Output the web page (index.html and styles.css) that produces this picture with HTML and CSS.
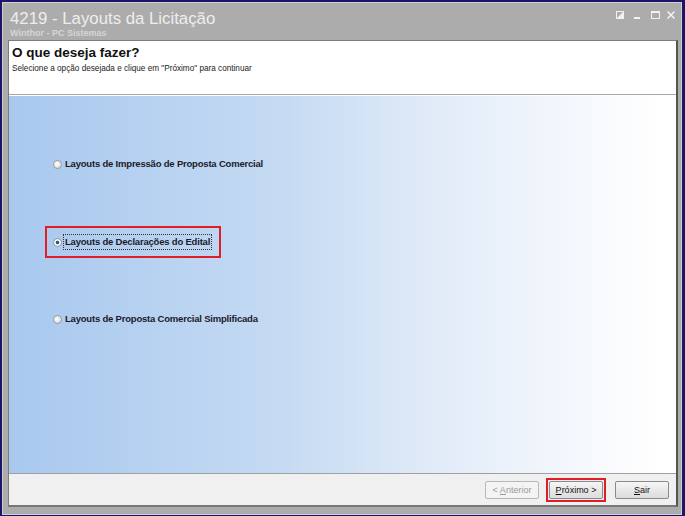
FILE: index.html
```html
<!DOCTYPE html>
<html lang="pt-BR">
<head>
  <meta charset="UTF-8">
  <title>4219 - Layouts da Licitação</title>
  <link rel="stylesheet" href="styles.css">
</head>
<body>
  <div class="window">
    <div class="titlebar">
      <div class="title-text">
        <div class="title">4219 - Layouts da Licitação</div>
        <div class="subtitle">Winthor - PC Sistemas</div>
      </div>
      <div class="win-controls">
        <svg class="ic-restore" width="8" height="8" viewBox="0 0 8 8"><rect x="0.5" y="0.5" width="7" height="7" fill="none" stroke="#f2f2f2"/><path d="M1 7 L7 1 L7 7 Z" fill="#f2f2f2"/></svg>
        <svg class="ic-min" width="6" height="8" viewBox="0 0 6 8"><rect x="0" y="6" width="6" height="2" fill="#f2f2f2"/></svg>
        <svg class="ic-max" width="9" height="8" viewBox="0 0 9 8"><rect x="0.5" y="0.5" width="8" height="7" fill="none" stroke="#f2f2f2"/><rect x="0" y="0" width="9" height="2" fill="#f2f2f2"/></svg>
        <svg class="ic-close" width="8" height="8" viewBox="0 0 8 8"><path d="M0.5 0.5 L7.5 7.5 M7.5 0.5 L0.5 7.5" stroke="#f2f2f2" stroke-width="1.5"/></svg>
      </div>
    </div>

    <div class="frame">
      <div class="header">
        <h1>O que deseja fazer?</h1>
        <p>Selecione a opção desejada e clique em "Próximo" para continuar</p>
      </div>

      <div class="options">
        <label class="option">
          <span class="radio"></span>
          <span class="label">Layouts de Impressão de Proposta Comercial</span>
        </label>
        <div class="highlight">
          <label class="option">
            <span class="radio checked"></span>
            <span class="label focused">Layouts de Declarações do Edital</span>
          </label>
        </div>
        <label class="option">
          <span class="radio"></span>
          <span class="label">Layouts de Proposta Comercial Simplificada</span>
        </label>
      </div>

      <div class="footer">
        <button class="btn" disabled>&lt; <u>A</u>nterior</button>
        <div class="btn-mark">
          <button class="btn"><u>P</u>róximo &gt;</button>
        </div>
        <button class="btn"><u>S</u>air</button>
      </div>
    </div>
  </div>
</body>
</html>
```

FILE: styles.css
```css
html, body {
  height: 100%;
}

body {
  margin: 0;
  background-color: #1c1668;
  font-family: "Liberation Sans", Arial, sans-serif;
}

.window {
  box-sizing: border-box;
  height: 513px;
  width: 680px;
  margin: 2px 0 0 2px;
  background-color: #acacac;
  border: 1px solid #d0d0d0;
  padding: 0 3px 7px 5px;
  display: flex;
  flex-direction: column;
}

.titlebar {
  height: 37px;
  display: flex;
  justify-content: space-between;
  align-items: flex-start;
  padding-left: 2px;
}

.title {
  font-family: "Liberation Sans", Arial, sans-serif;
  font-size: 16.8px;
  color: #eeeeee;
  line-height: 20px;
  margin-top: 6px;
}

.subtitle {
  font-family: "Liberation Sans", Arial, sans-serif;
  font-weight: bold;
  font-size: 9px;
  color: #d6d6d6;
  line-height: 9px;
}

.win-controls {
  display: flex;
  align-items: flex-start;
  margin-top: 8px;
  margin-right: 3px;
}

.ic-min {
  margin-left: 10px;
}

.ic-max {
  margin-left: 11px;
}

.ic-close {
  margin-left: 7px;
}

.frame {
  flex: 1;
  display: flex;
  flex-direction: column;
  border: 1px solid #7c7c7c;
  border-right: 2px solid #555;
  border-bottom: 2px solid #777;
  background-color: #f0f0f0;
}

.header {
  background-color: #fff;
  height: 51px;
  border-bottom: 1px solid #a8a8a8;
  padding: 2px 3px 0;
}

.header h1 {
  margin: 0;
  font-family: "Liberation Sans", Arial, sans-serif;
  font-size: 13.5px;
  font-weight: bold;
  line-height: 20px;
  color: #111;
}

.header p {
  margin: 0;
  font-family: "Liberation Sans", Arial, sans-serif;
  font-size: 8.2px;
  color: #222;
  line-height: 12px;
}

.options {
  flex: 1;
  background: linear-gradient(to right, #a8c8ee 0%, #c6dbf3 42%, #dfeaf8 62%, #f2f6fc 82%, #ffffff 98%);
  border-top: 1px solid #fff;
  display: flex;
  flex-direction: column;
  align-items: flex-start;
  padding: 61px 0 0 44px;
}

.option {
  display: flex;
  align-items: center;
  gap: 3px;
  height: 14px;
  white-space: nowrap;
}

.options > .option:first-child {
  margin-bottom: 55px;
}

.options > .option:last-child {
  margin-top: 54px;
}

.highlight {
  border: 2px solid #e11d25;
  padding: 7px 9px 7px 6px;
  margin-left: -8px;
}

.radio {
  box-sizing: border-box;
  width: 9px;
  height: 9px;
  border-radius: 50%;
  border: 1px solid #9a9a9a;
  background: radial-gradient(circle at 40% 40%, #ffffff 0%, #e0e0e0 70%, #c8c8c8 100%);
}

.radio.checked {
  background: radial-gradient(circle, #2a5f9e 0 1.6px, #ffffff 2.2px, #e4e4e4 100%);
}

.label {
  font-family: "Liberation Sans", Arial, sans-serif;
  font-weight: bold;
  font-size: 9.5px;
  letter-spacing: -0.2px;
  color: #1a1a2a;
  line-height: 12px;
}

.label.focused {
  outline: 1px dotted #333;
  outline-offset: 1px;
}

.footer {
  height: 31px;
  border-top: 1px solid #a0a0a0;
  display: flex;
  justify-content: flex-end;
  align-items: center;
  gap: 8px;
  padding-right: 7px;
}

.btn {
  width: 54px;
  height: 18px;
  padding: 0;
  border: 1px solid #8a8a8a;
  border-radius: 2px;
  background: linear-gradient(#f6f6f6, #dcdcdc);
  font-family: "Liberation Sans", Arial, sans-serif;
  font-size: 9px;
  color: #111;
}

.btn:disabled {
  border-color: #b8b8b8;
  background: #f4f4f4;
  color: #9a9a9a;
}

.btn-mark {
  border: 2px solid #e11d25;
  padding: 1px;
  margin: 0 -1px;
  display: flex;
}

.btn-mark + .btn {
  margin-left: 2px;
}
```
